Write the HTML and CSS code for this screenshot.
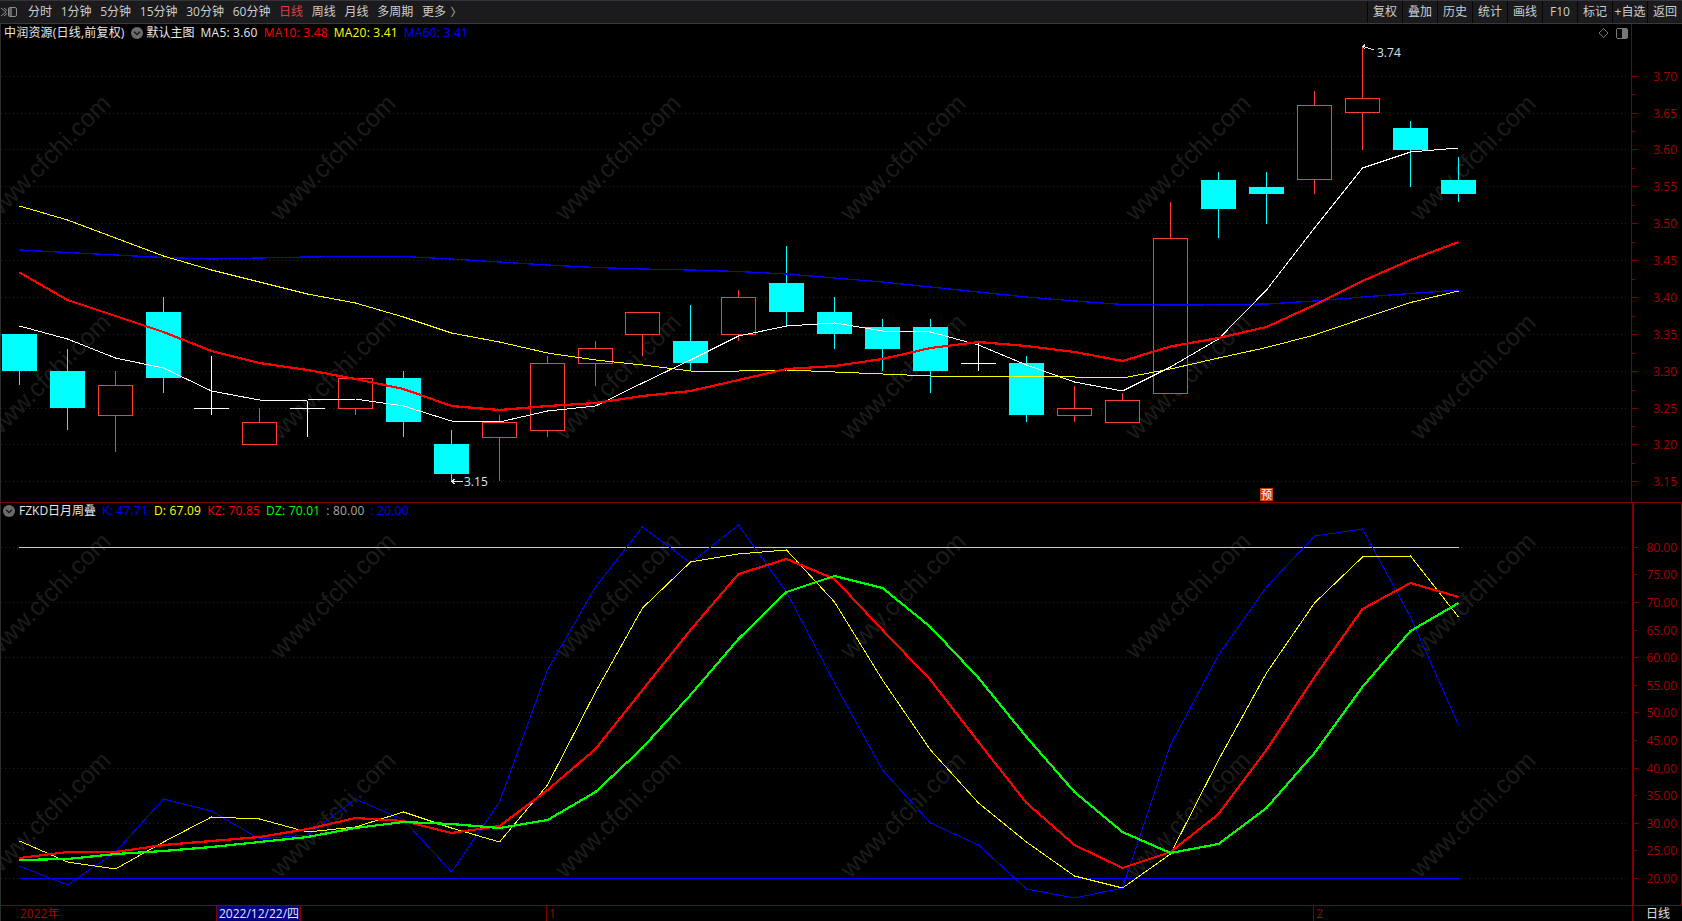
FILE: index.html
```html
<!DOCTYPE html>
<html lang="zh-CN">
<head>
<meta charset="utf-8">
<title>中润资源 日线</title>
<link rel="stylesheet" href="styles.css">
</head>
<body>
<header class="toolbar">
  <nav class="periods">
    <svg class="panel-toggle" width="18" height="12" viewBox="0 0 18 12"><path class="pt-chev" d="M1 2l5 4-5 4M4 2l3 2.5M7 7.5L4 10"/><rect class="pt-box" x="8.5" y="1.5" width="8" height="9" rx="1.5"/><rect class="pt-fill" x="9" y="2" width="3" height="8"/></svg>
    <span class="period">分时</span>
    <span class="period">1分钟</span>
    <span class="period">5分钟</span>
    <span class="period">15分钟</span>
    <span class="period">30分钟</span>
    <span class="period">60分钟</span>
    <span class="period is-active">日线</span>
    <span class="period">周线</span>
    <span class="period">月线</span>
    <span class="period">多周期</span>
    <span class="period">更多</span>
    <span class="more-arrow">〉</span>
  </nav>
  <nav class="actions">
    <span class="action">复权</span>
    <span class="action">叠加</span>
    <span class="action">历史</span>
    <span class="action">统计</span>
    <span class="action">画线</span>
    <span class="action">F10</span>
    <span class="action">标记</span>
    <span class="action">+自选</span>
    <span class="action">返回</span>
  </nav>
</header>

<main class="chart">
  <div class="watermarks">
    <span>www.cfchi.com</span><span>www.cfchi.com</span><span>www.cfchi.com</span><span>www.cfchi.com</span><span>www.cfchi.com</span><span>www.cfchi.com</span>
    <span>www.cfchi.com</span><span>www.cfchi.com</span><span>www.cfchi.com</span><span>www.cfchi.com</span><span>www.cfchi.com</span><span>www.cfchi.com</span>
    <span>www.cfchi.com</span><span>www.cfchi.com</span><span>www.cfchi.com</span><span>www.cfchi.com</span><span>www.cfchi.com</span><span>www.cfchi.com</span>
    <span>www.cfchi.com</span><span>www.cfchi.com</span><span>www.cfchi.com</span><span>www.cfchi.com</span><span>www.cfchi.com</span><span>www.cfchi.com</span>
  </div>

  <section class="pane pane-upper">
    <div class="legend">
      <span class="c-white wide">中润资源(日线,前复权)</span>
      <svg class="dropdown" width="12" height="12" viewBox="0 0 12 12"><circle cx="6" cy="6" r="6"/><path d="M3 4.8L6 7.6 9 4.8"/></svg>
      <span class="c-white">默认主图</span>
      <span class="c-white wide">MA5: 3.60</span>
      <span class="c-red wide">MA10: 3.48</span>
      <span class="c-yellow wide">MA20: 3.41</span>
      <span class="c-blue wide">MA60: 3.41</span>
    </div>
    <svg class="plot" width="1682" height="478" viewBox="0 24 1682 478">
      <path class="grid" d="M1 76.5H1628M1 113.5H1628M1 149.5H1628M1 186.5H1628M1 223.5H1628M1 260.5H1628M1 297.5H1628M1 334.5H1628M1 371.5H1628M1 408.5H1628M1 444.5H1628M1 481.5H1628"/>

      <path class="wick-cyan" d="M19.5 334V385M67.5 349V430M163.5 297V393M403.5 371V437M451.5 430V481M690.5 305V371M786.5 246V327M834.5 297V349M882.5 319V371M930.5 319V393M1026.5 356V422M1218.5 172V238M1266.5 172V224M1410.5 121V187M1458.5 157V202"/>
      <g class="body-cyan">
        <rect x="2" y="334" width="35" height="37"/>
        <rect x="50" y="371" width="35" height="37"/>
        <rect x="146" y="312" width="35" height="66"/>
        <rect x="386" y="378" width="35" height="44"/>
        <rect x="434" y="444" width="35" height="30"/>
        <rect x="673" y="341" width="35" height="22"/>
        <rect x="769" y="283" width="35" height="29"/>
        <rect x="817" y="312" width="35" height="22"/>
        <rect x="865" y="327" width="35" height="22"/>
        <rect x="913" y="327" width="35" height="44"/>
        <rect x="1009" y="363" width="35" height="52"/>
        <rect x="1201" y="180" width="35" height="29"/>
        <rect x="1249" y="187" width="35" height="7"/>
        <rect x="1393" y="128" width="35" height="22"/>
        <rect x="1441" y="180" width="35" height="14"/>
      </g>

      <path class="wick-red" d="M115.5 371V452M259.5 408V444M355.5 378V415M499.5 415V481M547.5 356V437M595.5 341V386M642.5 312V356M738.5 290V341M1074.5 386V422M1122.5 393V422M1170.5 202V393M1314.5 91V194M1362.5 47V150"/>
      <g class="body-red">
        <rect x="98.5" y="385.5" width="34" height="30"/>
        <rect x="242.5" y="422.5" width="34" height="22"/>
        <rect x="338.5" y="378.5" width="34" height="30"/>
        <rect x="482.5" y="422.5" width="34" height="15"/>
        <rect x="530.5" y="363.5" width="34" height="67"/>
        <rect x="578.5" y="348.5" width="34" height="15"/>
        <rect x="625.5" y="312.5" width="34" height="22"/>
        <rect x="721.5" y="297.5" width="34" height="37"/>
        <rect x="1057.5" y="408.5" width="34" height="7"/>
        <rect x="1105.5" y="400.5" width="34" height="22"/>
        <rect x="1153.5" y="238.5" width="34" height="155"/>
        <rect x="1297.5" y="105.5" width="34" height="74"/>
        <rect x="1345.5" y="98.5" width="34" height="14"/>
      </g>

      <path class="doji" d="M211.5 356V415M194 408.5H229M307.5 401V437M290 408.5H325M978.5 341V371M961 363.5H996"/>

      <polyline class="line ma60" points="19.5,250 67.5,252.5 115.5,255 163.5,257.5 211.5,259 259.5,258 307.5,257 355.5,256.5 403.5,256.5 451.5,259 499.5,262 547.5,265 595.5,267.5 642.5,269 690.5,270 738.5,271.5 786.5,274 834.5,278 882.5,282 930.5,287 978.5,292 1026.5,297 1074.5,301 1122.5,304.5 1170.5,305 1218.5,304.8 1266.5,304 1314.5,301 1362.5,297 1410.5,293.5 1458.5,290"/>
      <polyline class="line ma20" points="19.5,206 67.5,220 115.5,238 163.5,256 211.5,270 259.5,282 307.5,294 355.5,303 403.5,317 451.5,333 499.5,342 547.5,353 595.5,360 642.5,365 690.5,371 738.5,371 786.5,370 834.5,372 882.5,374 930.5,376 978.5,376 1026.5,376 1074.5,377 1122.5,378 1170.5,369 1218.5,358 1266.5,347.5 1314.5,335 1362.5,318.6 1410.5,302.5 1458.5,291"/>
      <polyline class="line ma5" points="19.5,326 67.5,339 115.5,358 163.5,368 211.5,391 259.5,400 307.5,400 355.5,399 403.5,406 451.5,421 499.5,422 547.5,411 595.5,406 642.5,383 690.5,360 738.5,336 786.5,326 834.5,323 882.5,331 930.5,332 978.5,345 1026.5,365 1074.5,382 1122.5,391 1170.5,367 1218.5,339 1266.5,290 1314.5,228 1362.5,168 1410.5,152 1458.5,148"/>
      <polyline class="line ma10" points="19.5,272.5 67.5,300 115.5,316 163.5,332 211.5,351 259.5,363 307.5,370 355.5,379 403.5,389 451.5,406 499.5,410 547.5,406 595.5,403 642.5,396 690.5,391 738.5,380 786.5,369 834.5,366 882.5,359 930.5,348 978.5,342 1026.5,346 1074.5,352 1122.5,361 1170.5,346.5 1218.5,338 1266.5,327 1314.5,305 1362.5,281 1410.5,260 1458.5,242"/>

      <path class="mark-arrow" d="M1374 50L1363 46.5M1365 44.5L1363 46.5 1365 49M463 481.5H452M454.5 479L452 481.5 454.5 484"/>
      <text class="mark-text" x="1377" y="57">3.74</text>
      <text class="mark-text" x="464" y="486">3.15</text>

      <path class="axis-line" d="M1631.5 24V502"/>
      <path class="axis-tick" d="M1632 76.5H1638M1632 113.5H1638M1632 149.5H1638M1632 186.5H1638M1632 223.5H1638M1632 260.5H1638M1632 297.5H1638M1632 334.5H1638M1632 371.5H1638M1632 408.5H1638M1632 444.5H1638M1632 481.5H1638M1632 94.5H1635M1632 131.5H1635M1632 168.5H1635M1632 205.5H1635M1632 242.5H1635M1632 279.5H1635M1632 316.5H1635M1632 353.5H1635M1632 390.5H1635M1632 426.5H1635M1632 463.5H1635"/>
      <g class="axis-labels">
        <text x="1677" y="81">3.70</text>
        <text x="1677" y="118">3.65</text>
        <text x="1677" y="154">3.60</text>
        <text x="1677" y="191">3.55</text>
        <text x="1677" y="228">3.50</text>
        <text x="1677" y="265">3.45</text>
        <text x="1677" y="302">3.40</text>
        <text x="1677" y="339">3.35</text>
        <text x="1677" y="376">3.30</text>
        <text x="1677" y="413">3.25</text>
        <text x="1677" y="449">3.20</text>
        <text x="1677" y="486">3.15</text>
      </g>

      <path class="corner-icon" d="M1603.5 28.5L1608 33 1603.5 37.5 1599 33Z"/>
      <rect class="corner-icon" x="1616.5" y="28.5" width="11" height="10" rx="2"/>
      <rect class="corner-fill" x="1622" y="29" width="5" height="9"/>
    </svg>
    <span class="forecast">预</span>
  </section>

  <section class="pane pane-lower">
    <div class="legend legend-lower">
      <svg class="dropdown" width="12" height="12" viewBox="0 0 12 12"><circle cx="6" cy="6" r="6"/><path d="M3 4.8L6 7.6 9 4.8"/></svg>
      <span class="c-white">FZKD日月周叠</span>
      <span class="c-blue wide">K: 47.71</span>
      <span class="c-yellow wide">D: 67.09</span>
      <span class="c-red wide">KZ: 70.85</span>
      <span class="c-green wide">DZ: 70.01</span>
      <span class="c-grey wide">: 80.00</span>
      <span class="c-blue wide">: 20.00</span>
    </div>
    <svg class="plot" width="1682" height="403" viewBox="0 502 1682 403">
      <path class="grid" d="M1 547.5H1628M1 602.5H1628M1 657.5H1628M1 712.5H1628M1 768.5H1628M1 823.5H1628M1 878.5H1628"/>
      <path class="level-80" d="M19 547.5H1459"/>
      <path class="level-20" d="M19 878.5H1459"/>
      <polyline class="line line-k" points="19.5,866 67.5,885 115.5,852 163.5,799 211.5,811 259.5,839 307.5,835 355.5,799 403.5,820 451.5,872 499.5,802 547.5,670 595.5,587 642.5,527 690.5,563 738.5,525 786.5,592 834.5,683 882.5,770 930.5,823 978.5,845 1026.5,889 1074.5,898 1122.5,888 1170.5,745 1218.5,655 1266.5,587 1314.5,536 1362.5,529 1410.5,617 1458.5,725"/>
      <polyline class="line line-d" points="19.5,841 67.5,862 115.5,869 163.5,842 211.5,817 259.5,819 307.5,832 355.5,827 403.5,812 451.5,828 499.5,842 547.5,785 595.5,692 642.5,608 690.5,562 738.5,554 786.5,550 834.5,602 882.5,680 930.5,750 978.5,803 1026.5,842 1074.5,876 1122.5,888 1170.5,854 1218.5,760 1266.5,673 1314.5,603 1362.5,557 1410.5,556 1458.5,617"/>
      <polyline class="line line-kz" points="19.5,858 67.5,852 115.5,852 163.5,845 211.5,841 259.5,837 307.5,829 355.5,818 403.5,821 451.5,833 499.5,826 547.5,790 595.5,749 642.5,690 690.5,630 738.5,574 786.5,559 834.5,579 882.5,630 930.5,680 978.5,742 1026.5,803 1074.5,845 1122.5,868 1170.5,852 1218.5,814 1266.5,750 1314.5,677 1362.5,609 1410.5,583 1458.5,597"/>
      <polyline class="line line-dz" points="19.5,860 67.5,859 115.5,854 163.5,851 211.5,847 259.5,842 307.5,837 355.5,828 403.5,822 451.5,824 499.5,828 547.5,820 595.5,792 642.5,748 690.5,695 738.5,639 786.5,592 834.5,576 882.5,588 930.5,627 978.5,678 1026.5,737 1074.5,792 1122.5,832 1170.5,853 1218.5,844 1266.5,808 1314.5,753 1362.5,687 1410.5,631 1458.5,603"/>

      <path class="axis-line" d="M0 502.5H1682"/>
      <path class="axis-thick" d="M1633 503V905M1681.5 503V905"/>
      <path class="axis-tick" d="M1634 547.5H1639M1634 602.5H1639M1634 657.5H1639M1634 712.5H1639M1634 768.5H1639M1634 823.5H1639M1634 878.5H1639M1634 574.5H1637M1634 630.5H1637M1634 685.5H1637M1634 740.5H1637M1634 795.5H1637M1634 850.5H1637"/>
      <g class="axis-labels">
        <text x="1677" y="552">80.00</text>
        <text x="1677" y="579">75.00</text>
        <text x="1677" y="607">70.00</text>
        <text x="1677" y="635">65.00</text>
        <text x="1677" y="662">60.00</text>
        <text x="1677" y="690">55.00</text>
        <text x="1677" y="717">50.00</text>
        <text x="1677" y="745">45.00</text>
        <text x="1677" y="773">40.00</text>
        <text x="1677" y="800">35.00</text>
        <text x="1677" y="828">30.00</text>
        <text x="1677" y="855">25.00</text>
        <text x="1677" y="883">20.00</text>
      </g>
    </svg>
  </section>

  <footer class="xaxis">
    <span class="xlabel x-year">2022年</span>
    <span class="xlabel x-cursor">2022/12/22/四</span>
    <span class="xlabel x-month x-jan">1</span>
    <span class="xlabel x-month x-feb">2</span>
    <span class="xlabel x-period">日线</span>
  </footer>
</main>
</body>
</html>
```

FILE: styles.css
```css
* { box-sizing: border-box; }

html, body {
  margin: 0;
  padding: 0;
  background: #000;
}

body {
  width: 1682px;
  height: 921px;
  overflow: hidden;
  display: flex;
  flex-direction: column;
  font-family: "Open Sans", "Noto Sans CJK SC", sans-serif;
  font-size: 12px;
  line-height: 16px;
  color: #ddd;
}

/* Toolbar */
.toolbar {
  height: 24px;
  flex: none;
  display: flex;
  justify-content: space-between;
  background: #1b1b1e;
  border-top: 1px solid #34343a;
  border-bottom: 1px solid #3a3a3e;
}

.periods {
  display: flex;
  align-items: center;
  gap: 8.7px;
}

.panel-toggle { margin-right: 1.3px; }
.pt-chev { fill: none; stroke: #8c8c8c; stroke-width: 1; }
.pt-box { fill: none; stroke: #8c8c8c; }
.pt-fill { fill: #666; }

.period { color: #cdcdcd; white-space: nowrap; }
.period.is-active { color: #e23c3c; }
.more-arrow { color: #bdbdbd; margin-left: -4px; width: 14px; font-size: 11px; }

.actions { display: flex; }

.action {
  width: 35px;
  display: flex;
  align-items: center;
  justify-content: center;
  white-space: nowrap;
  color: #cdcdcd;
  border-left: 1px solid #060606;
}

/* Chart */
.chart {
  position: relative;
  flex: 1;
  overflow: hidden;
  border-left: 1px solid #2c2c2c;
}

.watermarks {
  position: absolute;
  left: -96px;
  top: 24px;
  display: grid;
  grid-template-columns: repeat(6, 285px);
  grid-template-rows: repeat(4, 219px);
  place-items: center;
  font-family: "Liberation Sans", sans-serif;
  font-size: 25px;
  line-height: 25px;
  color: #1c1c1c;
}

.watermarks span {
  transform: rotate(-45deg);
  white-space: nowrap;
}

.pane { position: relative; }
.pane-upper { height: 478px; }
.pane-lower { height: 403px; }

.plot {
  display: block;
  margin-left: -1px;
  shape-rendering: crispEdges;
}

.legend {
  position: absolute;
  left: 3px;
  top: 1px;
  display: flex;
  align-items: center;
  gap: 6px;
  white-space: nowrap;
  z-index: 1;
}

.legend-lower { left: 2px; }
.legend .dropdown { margin-right: -2px; }
.wide { letter-spacing: 0.2px; }

.dropdown circle { fill: #6b6b6b; }
.dropdown path { fill: none; stroke: #1a1a1a; stroke-width: 1.4; }

.c-white { color: #e8e8e8; }
.c-red { color: #ff0000; }
.c-yellow { color: #ffff00; }
.c-blue { color: #0000ff; }
.c-green { color: #00ff00; }
.c-grey { color: #a8a8a8; }

.grid { fill: none; stroke: #7a0000; stroke-dasharray: 1 3; }

.wick-cyan { stroke: #00ffff; fill: none; }
.body-cyan rect { fill: #00ffff; }
.wick-red { stroke: #ff3c3c; fill: none; }
.body-red rect { fill: #000; stroke: #ff3c3c; }
.doji { stroke: #fff; fill: none; }

.line { fill: none; stroke-linejoin: round; }
.ma5 { stroke: #fff; stroke-width: 1; }
.ma10 { stroke: #ff0000; stroke-width: 2.2; }
.ma20 { stroke: #ffff00; stroke-width: 1; }
.ma60 { stroke: #0000ff; stroke-width: 1.3; }

.line-k { stroke: #0000ff; stroke-width: 1; }
.line-d { stroke: #ffff00; stroke-width: 1; }
.line-kz { stroke: #ff0000; stroke-width: 2.2; }
.line-dz { stroke: #00ff00; stroke-width: 2.2; }

.level-80 { stroke: #c8c8c8; fill: none; }
.level-20 { stroke: #0000ff; fill: none; }

.mark-arrow { fill: none; stroke: #e6e6e6; }
.mark-text { fill: #d8e4f0; font-size: 12px; shape-rendering: auto; }

.axis-line { fill: none; stroke: #800000; }
.axis-thick { fill: none; stroke: #800000; stroke-width: 2; }
.axis-tick { fill: none; stroke: #800000; }
.axis-labels text { fill: #a80000; font-size: 12px; text-anchor: end; }

.corner-icon { fill: none; stroke: #777; }
.corner-fill { fill: #777; }

.forecast {
  position: absolute;
  left: 1259px;
  top: 464px;
  width: 13px;
  height: 13px;
  background: #c04000;
  color: #fff;
  font-size: 11px;
  line-height: 13px;
  text-align: center;
}

/* Time axis */
.xaxis {
  position: relative;
  height: 16px;
  border-top: 1px solid #800000;
}

.xlabel {
  position: absolute;
  top: 0;
  height: 15px;
  line-height: 15px;
  color: #a80000;
}

.x-year { left: 19px; }

.x-cursor {
  left: 215px;
  width: 85px;
  padding-left: 2px;
  background: #000080;
  color: #e8e8f8;
  border-left: 1px solid #800000;
  border-right: 1px solid #800000;
  white-space: nowrap;
}

.x-month { border-left: 1px solid #800000; padding-left: 2px; }
.x-jan { left: 545px; }
.x-feb { left: 1312px; }

.x-period {
  left: 1631px;
  width: 50px;
  padding-left: 13px;
  color: #e0e0e0;
  border-left: 1px solid #800000;
}
```
